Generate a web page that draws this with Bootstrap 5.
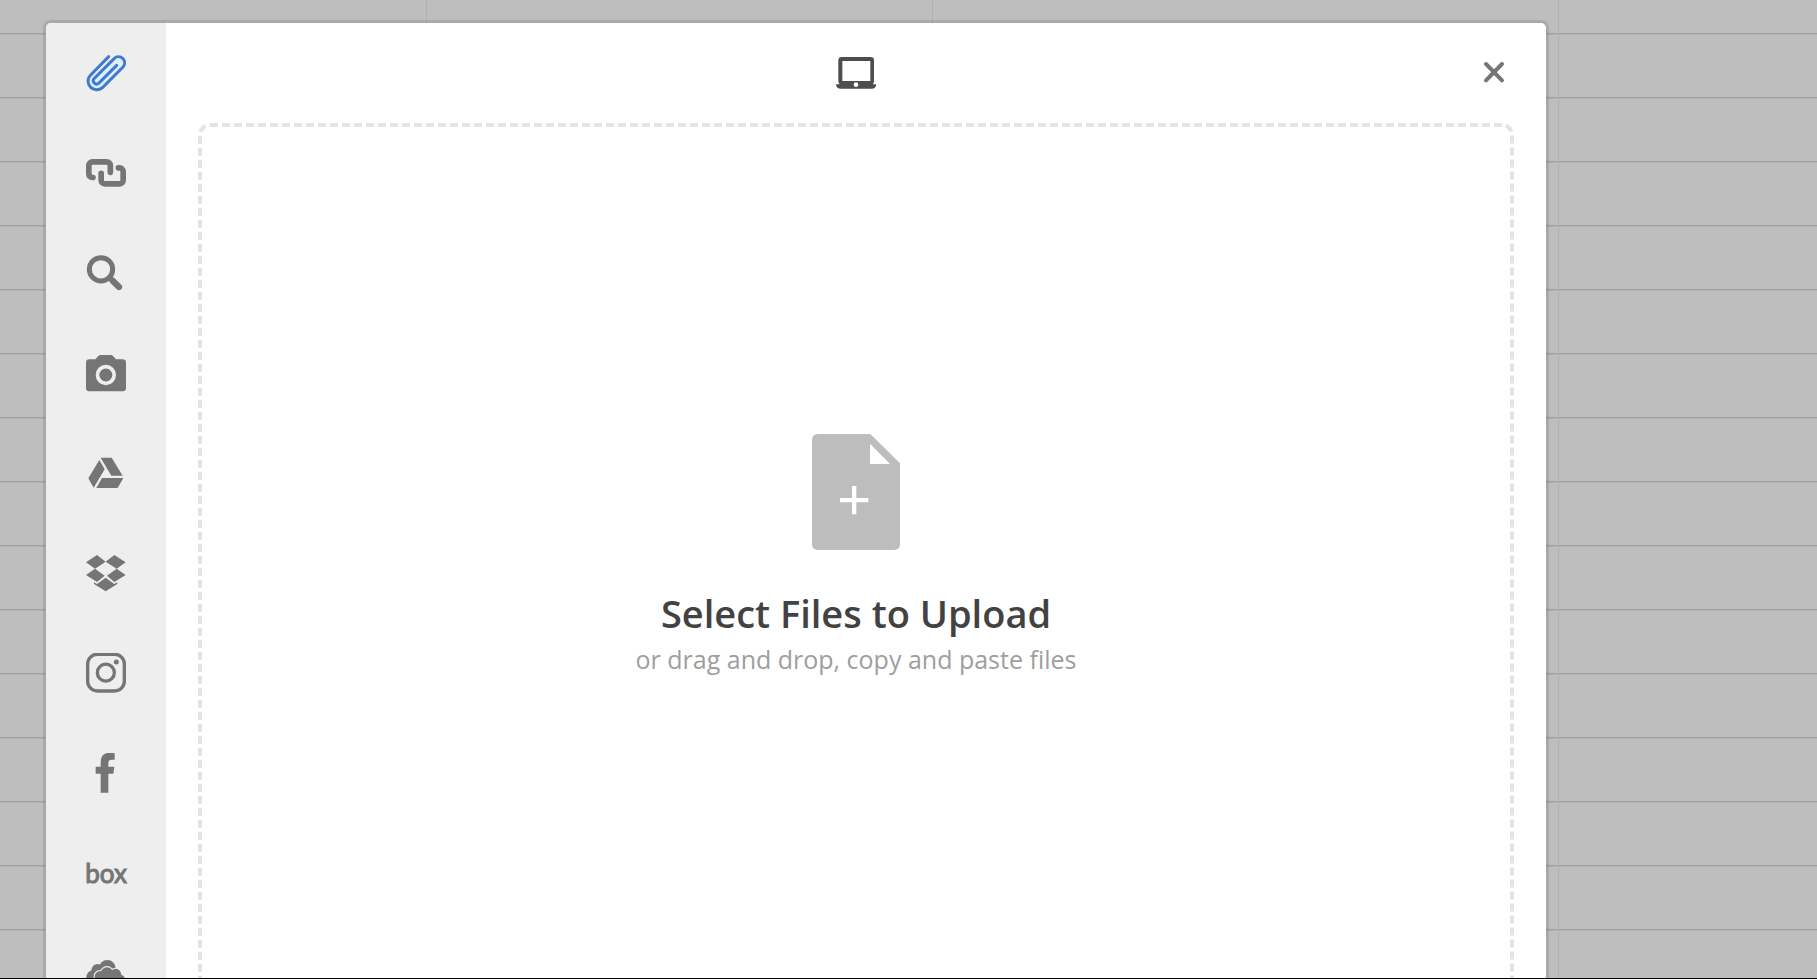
<!DOCTYPE html>
<html lang="en">
<head>
<meta charset="utf-8">
<meta name="viewport" content="width=device-width, initial-scale=1">
<title>Select Files to Upload</title>
<link href="https://cdn.jsdelivr.net/npm/bootstrap@5.3.0/dist/css/bootstrap.min.css" rel="stylesheet">
<style>
  body {
    font-family: "Open Sans", "Noto Sans", sans-serif;
    background-color: #bebebe;
    border-bottom: 1px solid #000;
  }
  /* dimmed spreadsheet behind the picker */
  .sheet {
    background-image:
      linear-gradient(#b0b1b1, #b0b1b1),
      linear-gradient(#b0b1b1, #b0b1b1),
      linear-gradient(#afb2b1, #afb2b1),
      linear-gradient(transparent 33px, #9fa4a3 33px, #9fa4a3 34px, #aeb2b1 34px, #aeb2b1 35px, transparent 35px);
    background-repeat: no-repeat, no-repeat, no-repeat, repeat;
    background-size: 1px 100%, 1px 100%, 1px 100%, 64px 64px;
    background-position: 426px 0, 932px 0, 1558px 0, 0 0;
  }
  .picker {
    width: min(1500px, calc(100% - 92px));
    margin: 23px 0 0 46px;
    border-radius: 5px 5px 0 0;
    box-shadow: 0 0 1px 3px rgba(0, 0, 0, .11);
  }
  .sources { width: 120px; background: #eee; border-radius: 5px 0 0 0; }
  .source-btn { height: 100px; color: #757575; }
  .source-btn.active { color: #3f7ad0; }
  .icon { width: 40px; height: 40px; display: block; }
  .topbar { display: grid; grid-template-columns: 1fr auto 1fr; height: 100px; }
  .close-btn { color: #757575; }
  .device { color: #4d4d4d; }
  .dropzone {
    margin: 0 32px -12px;
    border: 4px dashed #e3e3e3;
    border-radius: 12px;
    cursor: pointer;
  }
  .file-icon { width: 88px; height: 116px; }
  .drop-title { font-size: 38px; line-height: 52px; font-weight: 600; color: #424242; margin: 37px 0 0; }
  .drop-note { font-size: 25px; line-height: 41px; color: #9e9e9e; }
  .brand-text { font-family: Lato, sans-serif; font-size: 26px; font-weight: 400; }
</style>
</head>
<body class="vh-100 overflow-hidden">
<div class="sheet h-100 d-flex overflow-hidden">
  <div class="picker d-flex bg-white" role="dialog" aria-label="File picker">
    <nav class="sources flex-shrink-0 d-flex flex-column" aria-label="Sources">
      <button type="button" class="source-btn active btn border-0 p-0 flex-shrink-0 d-flex align-items-center justify-content-center" aria-label="My files">
        <svg class="icon" viewBox="258 159 120 120" fill="none" stroke="currentColor" stroke-width="9" stroke-linecap="round"><path stroke="#dcf0fb" stroke-width="40" d="M288 245L354 190"/><path d="M326 170L270 227A26 26 0 0 0 306 264L369 201A18.4 18.4 0 0 0 343 175L282 236A10 10 0 0 0 296 250L350 196"/></svg>
      </button>
      <button type="button" class="source-btn btn border-0 p-0 flex-shrink-0 d-flex align-items-center justify-content-center" aria-label="Link">
        <svg class="icon" viewBox="258 459 120 120" fill="none" stroke="currentColor" stroke-width="17" stroke-linecap="round"><path d="M279 532.500H277A11 11 0 0 1 266.500 522V496A11 11 0 0 1 277 485.500H320A11 11 0 0 1 331 496V517"/><path d="M355 503.500H359A11 11 0 0 1 369.500 514V541A11 11 0 0 1 359 551.500H314A11 11 0 0 1 303.500 541V520"/></svg>
      </button>
      <button type="button" class="source-btn btn border-0 p-0 flex-shrink-0 d-flex align-items-center justify-content-center" aria-label="Image search">
        <svg class="icon" viewBox="78 99 120 120" fill="none" stroke="currentColor"><circle cx="123" cy="148" r="35" stroke-width="15"/><path d="M149 174L156 181" stroke-width="15"/><path d="M158 182L177 201" stroke-width="19" stroke-linecap="round"/></svg>
      </button>
      <button type="button" class="source-btn btn border-0 p-0 flex-shrink-0 d-flex align-items-center justify-content-center" aria-label="Camera">
        <svg class="icon" viewBox="78 399 120 120" fill="currentColor"><path d="M88 418H106L115 408Q118 405 122 405H152Q156 405 159 408L168 418H188Q198 418 198 428V504Q198 514 188 514H88Q78 514 78 504V428Q78 418 88 418Z"/><circle cx="137.500" cy="465" r="25" fill="none" stroke="#eee" stroke-width="11"/></svg>
      </button>
      <button type="button" class="source-btn btn border-0 p-0 flex-shrink-0 d-flex align-items-center justify-content-center" aria-label="Google Drive">
        <svg class="icon" viewBox="78 99 120 120" fill="currentColor"><path d="M122 113H155L188 167H154ZM118 120L134 148L101 203L85 175ZM126 174H190L173 204H109Z"/></svg>
      </button>
      <button type="button" class="source-btn btn border-0 p-0 flex-shrink-0 d-flex align-items-center justify-content-center" aria-label="Dropbox">
        <svg class="icon" viewBox="78 399 120 120" fill="currentColor"><path d="M111 405L137 425L105 446L78 427ZM163 405L197 427L170 446L137 425ZM105 446L134 467L111 486L78 465ZM170 446L197 465L163 486L141 467ZM137 473L163 492L172 487V492L137 514L102 492V487L111 492Z"/></svg>
      </button>
      <button type="button" class="source-btn btn border-0 p-0 flex-shrink-0 d-flex align-items-center justify-content-center" aria-label="Instagram">
        <svg class="icon" viewBox="78 99 120 120" fill="none" stroke="currentColor" stroke-width="10"><rect x="83" y="103" width="110" height="110" rx="29"/><circle cx="137.500" cy="158" r="25.500"/><circle cx="169" cy="126" r="7.500" fill="currentColor" stroke="none"/></svg>
      </button>
      <button type="button" class="source-btn btn border-0 p-0 flex-shrink-0 d-flex align-items-center justify-content-center" aria-label="Facebook">
        <svg class="icon" viewBox="78 399 120 120" fill="currentColor"><path d="M122 518V461H107V440H122V427Q122 398 150 398Q159 398 164 400V419H155Q145 419 145 429V440H163L160 461H145V518Z"/></svg>
      </button>
      <button type="button" class="source-btn btn border-0 p-0 flex-shrink-0 d-flex align-items-center justify-content-center" aria-label="Box">
        <svg class="icon overflow-visible" viewBox="0 0 40 40"><text class="brand-text" x="20" y="30" text-anchor="middle" fill="currentColor" stroke="currentColor" stroke-width="1">box</text></svg>
      </button>
      <button type="button" class="source-btn btn border-0 p-0 flex-shrink-0 d-flex align-items-center justify-content-center" aria-label="Cloud drive">
        <svg class="icon" viewBox="166 399 124 120" fill="currentColor"><g><circle cx="190" cy="473" r="23"/><circle cx="202" cy="450" r="19"/><circle cx="232" cy="445" r="26"/></g><g stroke="#eee" stroke-width="7"><circle cx="210" cy="470" r="17"/><circle cx="231" cy="460" r="19"/><circle cx="258" cy="463" r="17"/><circle cx="271" cy="480" r="16"/></g><g><circle cx="210" cy="470" r="17"/><circle cx="231" cy="460" r="19"/><circle cx="258" cy="463" r="17"/><circle cx="271" cy="480" r="16"/><path d="M200 470H272V507H200Z"/></g></svg>
      </button>
    </nav>
    <main class="flex-grow-1 d-flex flex-column">
      <header class="topbar align-items-center flex-shrink-0">
        <span></span>
        <svg class="icon device" viewBox="167 69 120 120" fill="currentColor" role="img" aria-label="My device"><path fill-rule="evenodd" d="M184 81H271Q281 81 281 91V152Q281 159 277 163H288Q287 176 276 176H179Q168 176 167 163H178Q174 159 174 152V91Q174 81 184 81ZM186 93V153H270V93Z"/><circle cx="227" cy="164" r="7" fill="#fff"/></svg>
        <button type="button" class="close-btn btn border-0 p-0 ms-auto me-4" aria-label="Close">
          <svg class="icon mx-2" viewBox="101 158 120 120" fill="none" stroke="currentColor" stroke-width="12" stroke-linecap="round"><path d="M137 191L185 240M185 191L137 240"/></svg>
        </button>
      </header>
      <label class="dropzone flex-grow-1 d-flex flex-column align-items-center justify-content-center text-center" for="upload">
        <input type="file" class="visually-hidden" id="upload" multiple>
        <svg class="file-icon" viewBox="575 71 264 348" aria-hidden="true"><path fill="#bdbdbd" fill-rule="evenodd" d="M593 71H750L839 159V401Q839 419 821 419H593Q575 419 575 401V89Q575 71 593 71ZM749 100V161H809ZM695 227V263H659V276H695V312H708V276H744V263H708V227Z"/></svg>
        <span class="drop-title">Select Files to Upload</span>
        <span class="drop-note">or drag and drop, copy and paste files</span>
      </label>
    </main>
  </div>
</div>
<script src="https://cdn.jsdelivr.net/npm/bootstrap@5.3.0/dist/js/bootstrap.bundle.min.js"></script>
</body>
</html>
